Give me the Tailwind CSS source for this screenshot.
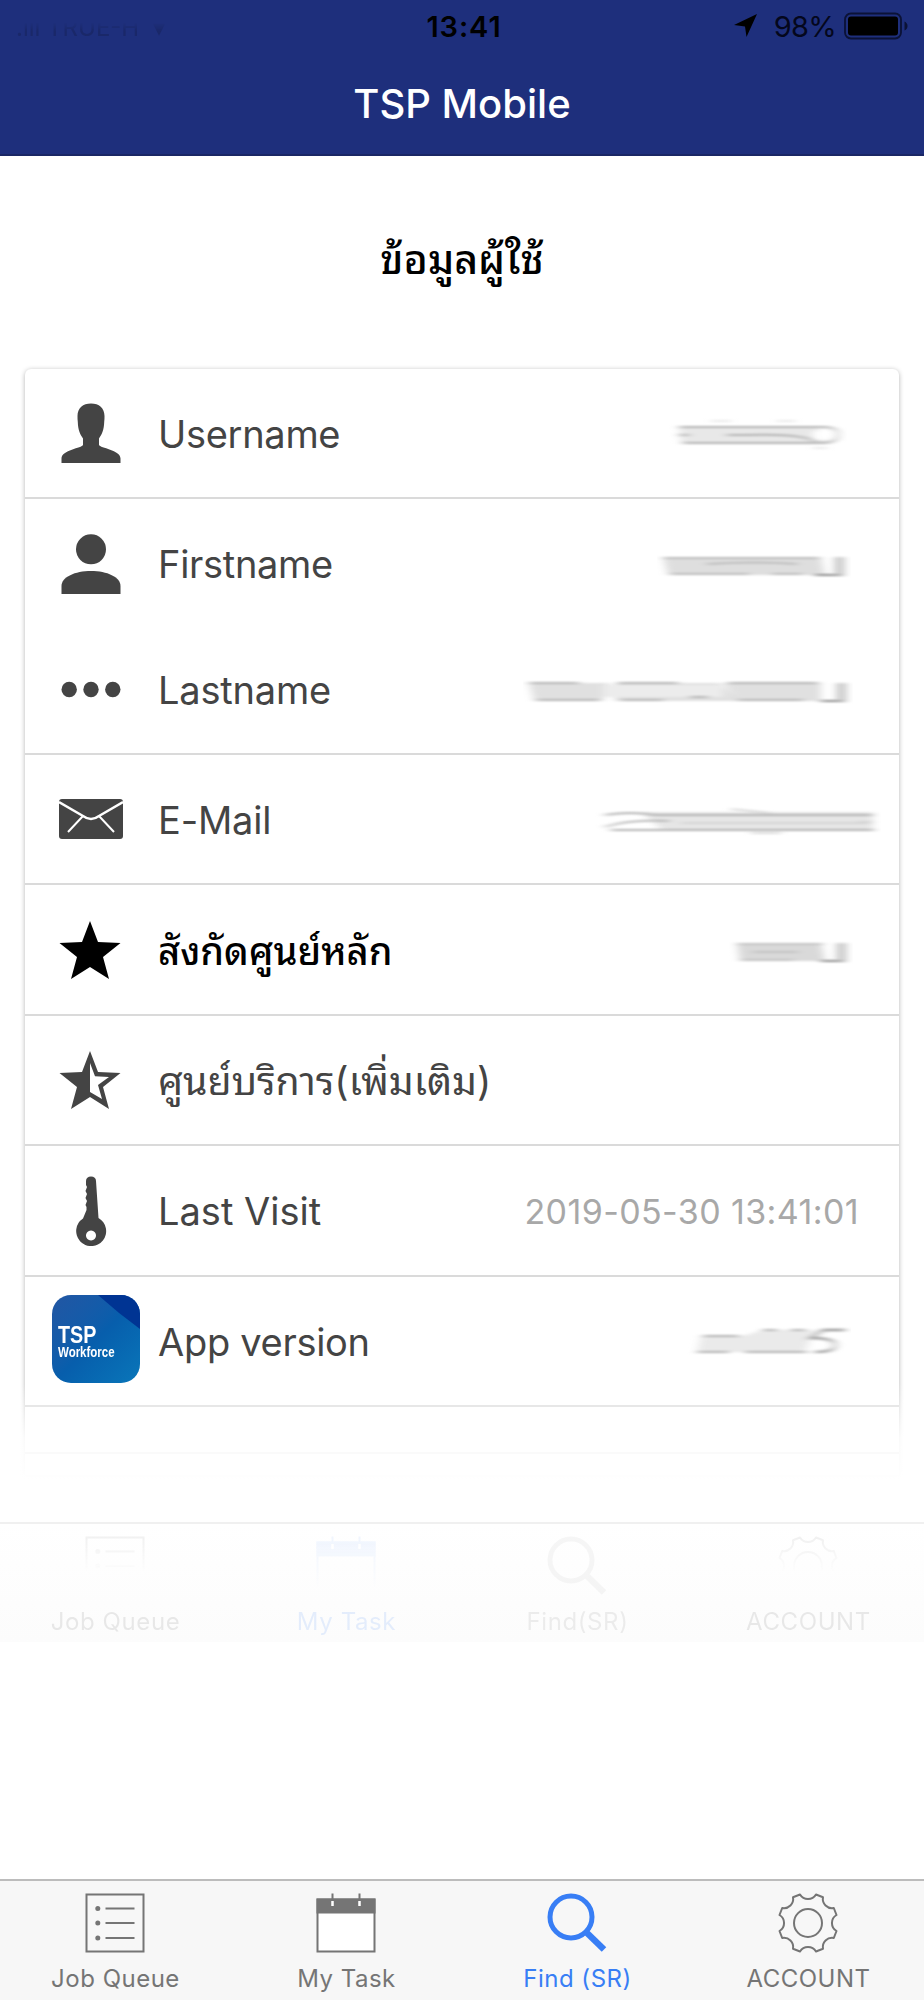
<!DOCTYPE html>
<html lang="th">
<head>
  <meta charset="UTF-8">
  <meta name="viewport" content="width=device-width, initial-scale=1.0">
  <title>TSP Mobile</title>
  <script src="https://cdn.jsdelivr.net/npm/@tailwindcss/browser@4"></script>
</head>
<body class="bg-white font-['Inter','Noto_Sans_Thai_Looped','Loma','Noto_Sans_Thai','Noto_Sans',sans-serif] text-[#444]">

  <!-- Shared icons -->
  <svg class="hidden">
    <symbol id="icon-list" viewBox="0 0 60 60">
      <rect x="1.500" y="1.500" width="57" height="57" fill="none" stroke="currentColor" stroke-width="2"/>
      <path d="M20.500 15.500h29M20.500 30h29M20.500 45h29" stroke="currentColor" stroke-width="2.200"/>
      <circle cx="12.800" cy="15.500" r="2.500" fill="currentColor"/>
      <circle cx="12.800" cy="30" r="2.500" fill="currentColor"/>
      <circle cx="12.800" cy="45" r="2.500" fill="currentColor"/>
    </symbol>
    <symbol id="icon-calendar" viewBox="0 0 60 60">
      <path d="M1.500 6.500h57v52h-57z" fill="none" stroke="currentColor" stroke-width="2"/>
      <path d="M.500 5.500h59v15h-59z" fill="currentColor"/>
      <path d="M16.500.500v6M43.500.500v6" stroke="currentColor" stroke-width="2"/>
      <path d="M16.500 8v5M43.500 8v5" stroke="#fff" stroke-width="2.500"/>
    </symbol>
    <symbol id="icon-search" viewBox="0 0 60 60">
      <circle cx="24" cy="24" r="21" fill="none" stroke="currentColor" stroke-width="5"/>
      <path d="M38.500 38.500L57 56.500" stroke="currentColor" stroke-width="6.500"/>
    </symbol>
    <symbol id="icon-gear" viewBox="-30 -30 60 60">
      <path d="M-8-28.500A9.300 9.300 0 0 0 8-28.500L15-25.800A9.300 9.300 0 0 0 25.800-15L28.500-8A9.300 9.300 0 0 0 28.500 8L25.800 15A9.300 9.300 0 0 0 15 25.800L8 28.500A9.300 9.300 0 0 0-8 28.500L-15 25.800A9.300 9.300 0 0 0-25.800 15L-28.500 8A9.300 9.300 0 0 0-28.500-8L-25.800-15A9.300 9.300 0 0 0-15-25.800Z" fill="none" stroke="currentColor" stroke-width="2" stroke-linejoin="round"/>
      <circle r="14" fill="none" stroke="currentColor" stroke-width="2"/>
    </symbol>
    <filter id="smear" x="-10%" y="-30%" width="120%" height="160%">
      <feGaussianBlur stdDeviation="4 0.9"/>
    </filter>
  </svg>

  <div class="flex h-[2000px] w-[924px] flex-col overflow-hidden">

    <!-- Header -->
    <header class="h-[156px] shrink-0 border-b-2 border-[#1a2765] bg-[#1e2f7c]">
      <div class="grid h-[52px] grid-cols-3 items-center text-black">
        <div class="pl-4 pt-[4px] text-[24px] leading-[30px] text-[#1a2869] mask-t-from-35% mask-t-to-60%">.ııl TRUE-H &nbsp;&#9662;</div>
        <div class="pl-1 text-center text-[29px] font-semibold leading-none tracking-[0.900px]">13:41</div>
        <div class="flex items-center justify-end pr-[14px]">
          <svg class="mr-[17px] h-6 w-6" viewBox="0 0 24 24"><path d="M24 0L1 11l11 1.500L13.500 23z"/></svg>
          <span class="mr-[8px] text-[29px] leading-none tracking-[-0.700px] text-[#04071c]">98%</span>
          <svg class="h-[28px] w-[66px]" viewBox="0 0 66 28">
            <rect x="1" y="1.500" width="56" height="25" rx="6" fill="none" stroke="#0b1236" stroke-width="1.800"/>
            <rect x="4" y="4.500" width="50" height="19" rx="3"/>
            <path d="M60.500 9.500q3 1.500 3 4.500t-3 4.500z" fill="#0b1236"/>
          </svg>
        </div>
      </div>
      <h1 class="text-center text-[40px] font-medium leading-[104px] text-white">TSP Mobile</h1>
    </header>

    <!-- User information -->
    <h2 class="h-[213px] shrink-0 text-center text-[41px] font-medium leading-[207px] text-black">ข้อมูลผู้ใช้</h2>

    <main class="relative mx-[25px] h-[1106px] shrink-0 rounded-t-[6px] shadow-[0_1px_5px_rgba(0,0,0,0.3)]">
      <div class="flex h-[130px] items-center border-b-2 border-[#dadada] pl-[36px]">
        <svg class="h-[60px] w-[60px]" viewBox="0 0 60 60" fill="#444">
          <path d="M30 .500C38 .500 43.500 5 43.500 13c0 2 0 4-.300 6C43 27 41 31 38 35.500V42c1 3 21.500 5 21.500 13.500v4.500H.500v-4.500C.500 47 21 45 22 42v-6.500C19 31 17 27 16.800 19c-.300-2-.300-4-.300-6C16.500 5 22 .500 30 .500z"/>
        </svg>
        <span class="ml-[37px] pt-[2px] text-[38px] tracking-[-0.300px]">Username</span>
        <svg class="ml-auto mr-[52px] mt-1 h-[40px] w-[180px]" viewBox="0 0 180 40">
          <g filter="url(#smear)">
            <path d="M12 12h139l8 16H14z" fill="#e8e8e8"/>
            <path d="M12 12h146q14 1 13 8t-14 8H16M12 20h10M60 20h20q55-2 70 7" fill="none" stroke="#b4b4b4" stroke-width="2"/>
            <path d="M44 6h20M110 6h18M146 33h14" fill="none" stroke="#e4e4e4" stroke-width="1.600"/>
            <path d="M146 16h10v9h-10z" fill="#fff"/>
          </g>
        </svg>
      </div>

      <div class="flex h-[129px] items-center pl-[36px]">
        <svg class="h-[60px] w-[60px]" viewBox="0 0 60 60" fill="#444">
          <circle cx="30" cy="15.300" r="15"/>
          <path d="M.500 60V52C.500 43 14 37 30 37s29.500 6 29.500 15v8z"/>
        </svg>
        <span class="ml-[37px] pt-[2px] text-[38px] tracking-[-0.300px]">Firstname</span>
        <svg class="ml-auto mr-[48px] mt-1 h-[40px] w-[194px]" viewBox="0 0 194 40">
          <g filter="url(#smear)">
            <path d="M6 11h158l4 18H11z" fill="#dedede"/>
            <path d="M6 12h156M14 28h78M115 28h30M50 18q50-3 90 0" fill="none" stroke="#bcbcbc" stroke-width="1.800"/>
            <path d="M158 29h28" fill="none" stroke="#8c8c8c" stroke-width="2"/>
            <path d="M178 11h9v18h-9z" fill="#c4c4c4"/>
          </g>
        </svg>
      </div>

      <div class="flex h-[127px] items-center border-b-2 border-[#dadada] pl-[36px]">
        <svg class="-mt-[3px] h-[60px] w-[60px]" viewBox="0 0 60 60" fill="#444">
          <circle cx="8.200" cy="30.500" r="7.700"/><circle cx="30" cy="30.500" r="7.700"/><circle cx="51.800" cy="30.500" r="7.700"/>
        </svg>
        <span class="ml-[37px] text-[38px] tracking-[-0.200px]">Lastname</span>
        <svg class="ml-auto mr-[46px] h-[40px] w-[330px]" viewBox="0 0 330 40">
          <g filter="url(#smear)">
            <path d="M6 12h80l-6 18H11zM92 12h105l22 18H92zM200 12h98v18h-80z" fill="#e0e0e0"/>
            <path d="M80 14h120v12H80z" fill="#ececec"/>
            <path d="M6 12h50M95 12h60M205 12h90M14 29h62M98 29h42M167 26h18M215 29h65" fill="none" stroke="#b5b5b5" stroke-width="1.800"/>
            <path d="M298 30h24" fill="none" stroke="#8c8c8c" stroke-width="2"/>
            <path d="M314 12h9v18h-9z" fill="#c4c4c4"/>
          </g>
        </svg>
      </div>

      <div class="flex h-[130px] items-center border-b-2 border-[#dadada] pl-[34px]">
        <svg class="h-[40px] w-[64px]" viewBox="0 0 64 40">
          <rect width="64" height="40" rx="3" fill="#444"/>
          <path d="M0 1.500L24 15.500q8 6 16 0L64 1.500" fill="none" stroke="#fff" stroke-width="2.400" transform="translate(0 1.500)"/>
          <path d="M24 17L9 33M40 17L55 33" stroke="#fff" stroke-width="2"/>
        </svg>
        <span class="ml-[35px] pt-[2px] text-[38px] tracking-[-0.200px]">E-Mail</span>
        <svg class="ml-auto mr-[18px] mt-1 h-[40px] w-[290px]" viewBox="0 0 290 40">
          <g filter="url(#smear)">
            <path d="M50 11h232v17H70z" fill="#e6e6e6"/>
            <path d="M14 14q26-4 49 0h219M14 26q24-8 64-6M20 29h263" fill="none" stroke="#b4b4b4" stroke-width="1.800"/>
            <path d="M90 22h188M140 8l40 4M160 32h30M268 21h14" fill="none" stroke="#d0d0d0" stroke-width="1.700"/>
          </g>
        </svg>
      </div>

      <div class="flex h-[131px] items-center border-b-2 border-[#dadada] pl-[34px] text-black">
        <svg class="h-[60px] w-[62px]" viewBox="0 0 62 60">
          <path d="M31 1l8 21 22.500 1-17.500 14 6 22-19-12-19 12 6-22L.500 23 23 22z"/>
        </svg>
        <span class="ml-[37px] pt-[3px] text-[38px] font-medium">สังกัดศูนย์หลัก</span>
        <svg class="ml-auto mr-[46px] mt-[4px] h-[40px] w-[124px]" viewBox="0 0 124 40">
          <g filter="url(#smear)">
            <path d="M8 11h84l4 18H11z" fill="#d9d9d9"/>
            <path d="M8 12h86M12 28h52M24 20h45" fill="none" stroke="#bcbcbc" stroke-width="1.700"/>
            <path d="M92 29h24" fill="none" stroke="#8c8c8c" stroke-width="2"/>
            <path d="M108 11h9v18h-9z" fill="#c4c4c4"/>
          </g>
        </svg>
      </div>

      <div class="flex h-[130px] items-center border-b-2 border-[#dadada] pl-[34px]">
        <svg class="h-[60px] w-[62px]" viewBox="0 0 62 60" fill="#444">
          <path fill-rule="evenodd" d="M31 1l8 21 22.500 1-17.500 14 6 22-19-12-19 12 6-22L.500 23 23 22zM31 13v29l12 7-4-14 11-8-14-.800z"/>
        </svg>
        <span class="ml-[37px] pt-[3px] text-[39.300px]">ศูนย์บริการ(เพิ่มเติม)</span>
      </div>

      <div class="flex h-[131px] items-center border-b-2 border-[#dadada] pl-[36px]">
        <svg class="h-[70px] w-[60px]" viewBox="0 0 60 70" fill="#444">
          <path fill-rule="evenodd" d="M30 .500c3 0 5 1.500 5 4.500L37.500 42A15 15 0 1 1 22 42.500l3.500-8.500v-3l-1-2 1.500-4-1.500-3 1.500-4-1.500-3 1.500-4-1-2V5c0-3 2-4.500 5-4.500zM30 54.500a5 5 0 1 0 .010 0z"/>
        </svg>
        <span class="ml-[37px] pt-[2px] text-[38px]">Last Visit</span>
        <span class="ml-auto mr-[40px] pt-[1px] text-[34px] tracking-[0.400px] text-[#a8a8a8]">2019-05-30 13:41:01</span>
      </div>

      <div class="flex h-[130px] items-center border-b-2 border-[#dadada] pl-[27px]">
        <div class="relative -mt-1 h-[88px] w-[88px] overflow-hidden rounded-[19px] bg-linear-to-br from-[#2156a3] via-[#075eac] to-[#0a76b9] pl-[6px] pt-[28px] font-['Liberation_Sans'] font-bold text-white">
          <svg class="absolute right-0 top-0 h-[36px] w-[42px]" viewBox="0 0 42 36"><path d="M0 0h42v34Q20 18 0 0z" fill="#003493"/></svg>
          <p class="w-[50px] origin-left scale-x-[0.82] text-[24px] leading-[24px]">TSP</p>
          <p class="-mt-[3px] w-[70px] origin-left scale-x-[0.82] text-[14px] leading-[16px]">Workforce</p>
        </div>
        <span class="ml-[18px] pt-[2px] text-[38px] tracking-[-0.300px]">App version</span>
        <svg class="ml-auto mr-[48px] mt-1 h-[40px] w-[170px]" viewBox="0 0 170 40">
          <g filter="url(#smear)">
            <path d="M20 13h42l20-6h52l-10 22H16z" fill="#eaeaea"/>
            <path d="M22 13h36M16 29h32M64 29h62M82 7h14M110 7h14" fill="none" stroke="#b4b4b4" stroke-width="1.800"/>
            <path d="M134 29q20 0 20-7t-24-7l12-8h22" fill="none" stroke="#9c9c9c" stroke-width="2.400"/>
          </g>
        </svg>
      </div>

      <div class="h-[47px] border-b-2 border-[#cfcfcf]"></div>

      <!-- Bottom fade -->
      <div class="absolute -inset-x-2 -bottom-2 h-[100px] bg-linear-to-b from-white/0 via-white/85 via-55% to-white"></div>
    </main>

    <!-- Inactive tab bar, faded out -->
    <div class="mt-[47px] h-[120px] shrink-0 border-t-2 border-[#f0f0f0] bg-linear-to-b from-white to-[#fcfcfc] text-[#777]">
      <div class="grid h-full grid-cols-4 pt-3 text-center text-[24px] leading-[30px] tracking-[0.6px]">
        <div><svg class="mx-auto h-[60px] w-[60px] -translate-x-px opacity-10 mask-b-from-0% mask-b-to-60%"><use href="#icon-list"/></svg><p class="mt-[11px] opacity-15">Job Queue</p></div>
        <div class="text-[#387ef5]"><svg class="mx-auto h-[60px] w-[60px] -translate-x-px opacity-7 mask-b-from-0% mask-b-to-90%"><use href="#icon-calendar"/></svg><p class="mt-[11px] opacity-12">My Task</p></div>
        <div><svg class="mx-auto h-[60px] w-[60px] -translate-x-px opacity-6"><use href="#icon-search"/></svg><p class="mt-[11px] opacity-12">Find(SR)</p></div>
        <div><svg class="mx-auto h-[60px] w-[60px] -translate-x-px opacity-10 mask-b-from-0% mask-b-to-60%"><use href="#icon-gear"/></svg><p class="mt-[11px] opacity-15">ACCOUNT</p></div>
      </div>
    </div>

    <!-- Tab bar -->
    <nav class="mt-auto h-[121px] shrink-0 border-t-2 border-[#bcbcbc] bg-[#f7f7f7] text-[#757575]">
      <div class="grid h-full grid-cols-4 pt-3 text-center text-[24px] leading-[30px] tracking-[0.5px]">
        <div><svg class="mx-auto h-[60px] w-[60px] -translate-x-px"><use href="#icon-list"/></svg><p class="mt-[11px]">Job Queue</p></div>
        <div><svg class="mx-auto h-[60px] w-[60px] -translate-x-px"><rect x="2" y="20" width="56" height="38" fill="#fff"/><use href="#icon-calendar"/></svg><p class="mt-[11px]">My Task</p></div>
        <div class="text-[#387ef5]"><svg class="mx-auto h-[60px] w-[60px] -translate-x-px"><use href="#icon-search"/></svg><p class="mt-[11px]">Find (SR)</p></div>
        <div><svg class="mx-auto h-[60px] w-[60px] -translate-x-px"><use href="#icon-gear"/></svg><p class="mt-[11px]">ACCOUNT</p></div>
      </div>
    </nav>

  </div>

</body>
</html>
